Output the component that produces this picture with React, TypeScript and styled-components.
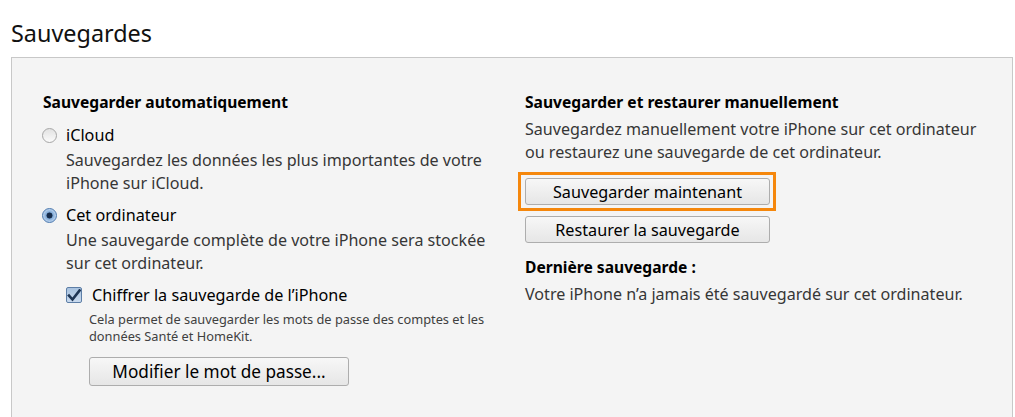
import React from "react";
import styled, { createGlobalStyle } from "styled-components";

const Global = createGlobalStyle`
  html, body { margin: 0; padding: 0; background: #ffffff; }
  body { font-family: "Noto Sans", "Open Sans", "DejaVu Sans", sans-serif; color: #000; }
  * { box-sizing: border-box; }
`;

const Page = styled.div`
  width: 1015px;
  height: 417px;
  overflow: hidden;
  padding: 17px 0 0 11px;
`;

const Title = styled.h1`
  margin: 0;
  font-size: 23.4px;
  font-weight: 400;
  line-height: 32px;
  height: 40px;
  color: #111;
`;

const Panel = styled.section`
  width: 1002px;
  height: 400px;
  background: #f4f4f4;
  border: 1px solid #c8c8c8;
  display: grid;
  grid-template-columns: 482px 1fr;
  padding: 33px 0 0 31px;
`;

const Column = styled.div`
  display: flex;
  flex-direction: column;
  align-items: flex-start;
`;

const Heading = styled.h2<{ $mt?: number }>`
  margin: ${(p) => p.$mt ?? 0}px 0 0 0;
  font-size: 15.6px;
  font-weight: 700;
  line-height: 22px;
  color: #000;
`;

const Text = styled.p<{ $mt?: number; $indent?: number }>`
  margin: ${(p) => p.$mt ?? 0}px 0 0 ${(p) => p.$indent ?? 0}px;
  font-size: 16.1px;
  line-height: 23px;
  color: #363636;
`;

const SmallText = styled.p<{ $mt?: number; $indent?: number }>`
  margin: ${(p) => p.$mt ?? 0}px 0 0 ${(p) => p.$indent ?? 0}px;
  font-size: 12.8px;
  line-height: 17px;
  color: #404040;
`;

const OptionRow = styled.label<{ $mt?: number; $indent?: number; $gap?: number }>`
  display: flex;
  align-items: center;
  gap: ${(p) => p.$gap ?? 9}px;
  margin: ${(p) => p.$mt ?? 0}px 0 0 ${(p) => p.$indent ?? 0}px;
  height: 24px;
  font-size: 16.2px;
  color: #000;
`;

const Radio = styled.span<{ $checked?: boolean }>`
  width: 15px;
  height: 15px;
  border-radius: 50%;
  flex: none;
  margin-left: -1px;
  border: 1px solid ${(p) => (p.$checked ? "#4a78ae" : "#a6a6a6")};
  background: ${(p) =>
    p.$checked
      ? "radial-gradient(circle at 50% 50%, #172c4b 0 2.7px, #7fa9d6 3.3px, #bcd3ee 6.5px)"
      : "linear-gradient(#e2e2e2, #fbfbfb)"};
`;

const Checkbox = styled.span`
  width: 16px;
  height: 16px;
  flex: none;
  border: 1px solid #5d7ea6;
  border-radius: 2px;
  background: linear-gradient(#a8c2df, #c9daee);
  display: flex;
  align-items: center;
  justify-content: center;
`;

const Button = styled.button<{ $mt?: number; $w: number; $h?: number; $fs?: number }>`
  margin-top: ${(p) => p.$mt ?? 0}px;
  width: ${(p) => p.$w}px;
  height: ${(p) => p.$h ?? 27}px;
  border: 1px solid #adadad;
  border-radius: 3px;
  background: linear-gradient(#f7f7f7, #e6e6e6);
  font-family: inherit;
  font-size: ${(p) => p.$fs ?? 16.2}px;
  color: #000;
  padding: 1px 0 0 0;
  line-height: 1;
`;

const ButtonIndent = styled.div`
  margin-left: 46px;
`;

const Highlight = styled.div<{ $mt?: number }>`
  margin: ${(p) => p.$mt ?? 0}px 0 0 -7px;
  border: 3px solid #f5870c;
  padding: 3px 3px 3px 4px;
  display: flex;
`;

export default function App() {
  return (
    <>
      <Global />
      <Page>
        <Title>Sauvegardes</Title>
        <Panel>
          <Column>
            <Heading>Sauvegarder automatiquement</Heading>
            <OptionRow $mt={10}>
              <Radio />
              iCloud
            </OptionRow>
            <Text $mt={2} $indent={23}>
              Sauvegardez les données les plus importantes de votre
              <br />
              iPhone sur iCloud.
            </Text>
            <OptionRow $mt={8}>
              <Radio $checked />
              Cet ordinateur
            </OptionRow>
            <Text $mt={2} $indent={23}>
              Une sauvegarde complète de votre iPhone sera stockée
              <br />
              sur cet ordinateur.
            </Text>
            <OptionRow $mt={8} $indent={23} $gap={10}>
              <Checkbox>
                <svg width="14" height="13" viewBox="0 0 14 13">
                  <path
                    d="M2 6.5 L5.5 10.5 L12.5 1.5"
                    fill="none"
                    stroke="#1e3554"
                    strokeWidth="2.6"
                    strokeLinecap="square"
                  />
                </svg>
              </Checkbox>
              Chiffrer la sauvegarde de l’iPhone
            </OptionRow>
            <SmallText $mt={4} $indent={46}>
              Cela permet de sauvegarder les mots de passe des comptes et les
              <br />
              données Santé et HomeKit.
            </SmallText>
            <ButtonIndent>
              <Button $mt={12} $w={260} $h={29} $fs={17.2}>
                Modifier le mot de passe...
              </Button>
            </ButtonIndent>
          </Column>
          <Column>
            <Heading>Sauvegarder et restaurer manuellement</Heading>
            <Text $mt={5}>
              Sauvegardez manuellement votre iPhone sur cet ordinateur
              <br />
              ou restaurez une sauvegarde de cet ordinateur.
            </Text>
            <Highlight $mt={8}>
              <Button $w={245}>Sauvegarder maintenant</Button>
            </Highlight>
            <Button $mt={5} $w={245}>
              Restaurer la sauvegarde
            </Button>
            <Heading $mt={13}>Dernière sauvegarde :</Heading>
            <Text $mt={5}>Votre iPhone n’a jamais été sauvegardé sur cet ordinateur.</Text>
          </Column>
        </Panel>
      </Page>
    </>
  );
}
